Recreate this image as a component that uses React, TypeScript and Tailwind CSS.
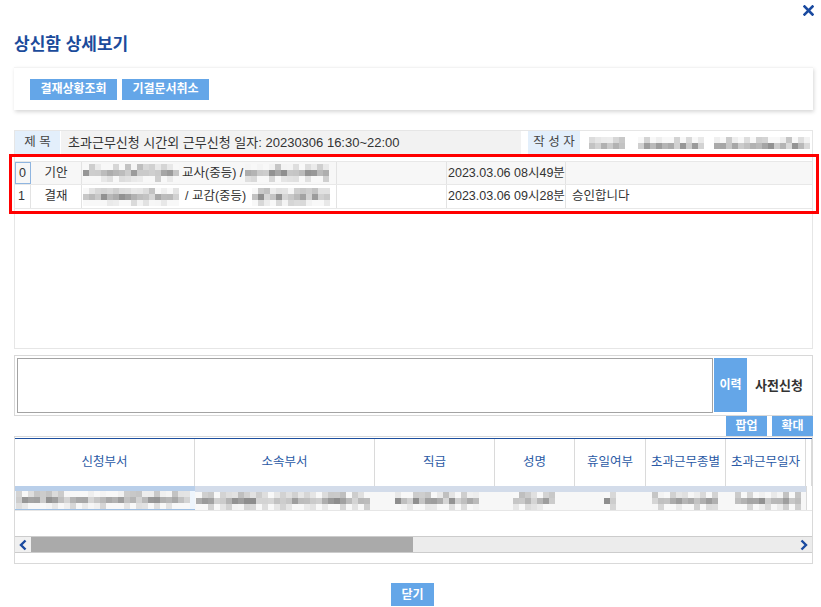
import React from 'react';

// small deterministic generator so the blurred (mosaic) cells look the same each render
function rng(seed: number) {
    let a = seed * 2654435761;
    return () => {
        a |= 0;
        a = (a + 0x6d2b79f5) | 0;
        let t = Math.imul(a ^ (a >>> 15), 1 | a);
        t = (t + Math.imul(t ^ (t >>> 7), 61 | t)) ^ t;
        return ((t ^ (t >>> 14)) >>> 0) / 4294967296;
    };
}

interface MosaicProps {
    w: number;
    seed: number;
    rows?: number;
    light?: number;
}

const Mosaic: React.FC<MosaicProps> = ({ w, seed, rows = 3, light = 0 }) => {
    const r = rng(seed);
    const cols = Math.max(1, Math.round(w / 6));
    const cells = [];
    for (let y = 0; y < rows; y++) {
        for (let x = 0; x < cols; x++) {
            const base = y === 1 ? 140 : y === 0 ? 190 : 205;
            const v = Math.min(248, Math.round(base + r() * 75 + light));
            cells.push(<div key={`${y}-${x}`} style={{ background: `rgb(${v},${v},${v})` }} />);
        }
    }
    return (
        <div
            className="grid shrink-0"
            style={{ gridTemplateColumns: `repeat(${cols}, 6px)`, gridAutoRows: '6px', width: cols * 6 }}
        >
            {cells}
        </div>
    );
};

const CloseIcon = () => (
    <svg width="11" height="11" viewBox="0 0 11 11">
        <path d="M1.5 1.5 L9.5 9.5 M9.5 1.5 L1.5 9.5" stroke="#1a4aa0" strokeWidth="2.6" strokeLinecap="square" />
    </svg>
);

const Chevron = ({ dir }: { dir: 'left' | 'right' }) => (
    <svg width="8" height="12" viewBox="0 0 8 12">
        <path
            d={dir === 'left' ? 'M6.5 1.5 L2 6 L6.5 10.5' : 'M1.5 1.5 L6 6 L1.5 10.5'}
            fill="none"
            stroke="#1a4aa0"
            strokeWidth="2.4"
        />
    </svg>
);

const BlueButton: React.FC<{ label: string; className?: string }> = ({ label, className = '' }) => (
    <button className={`bg-[#64a6e8] text-white font-bold text-[12px] flex items-center justify-center ${className}`}>
        {label}
    </button>
);

const approvals = [
    { idx: '0', kind: '기안', role: '교사(중등) / ', date: '2023.03.06 08시49분', memo: '', seed: 11 },
    { idx: '1', kind: '결재', role: '/ 교감(중등)', date: '2023.03.06 09시28분', memo: '승인합니다', seed: 37 },
];

const gridCols = [
    { label: '신청부서', w: 'w-[180px]', mw: 174, mOff: 'pl-[1px]', seed: 5 },
    { label: '소속부서', w: 'w-[180px]', mw: 174, mOff: 'pl-[1px]', seed: 19 },
    { label: '직급', w: 'w-[120px]', mw: 84, mOff: 'pl-[20px]', seed: 23 },
    { label: '성명', w: 'w-[80px]', mw: 42, mOff: 'pl-[18px]', seed: 41 },
    { label: '휴일여부', w: 'w-[71px]', mw: 12, mOff: 'pl-[29px]', seed: 53 },
    { label: '초과근무종별', w: 'w-[80px]', mw: 66, mOff: 'pl-[6px]', seed: 61 },
    { label: '초과근무일자', w: 'w-[80px]', mw: 66, mOff: 'pl-[9px]', seed: 71 },
];

export default function App() {
    return (
        <div className="w-[821px] h-[607px] bg-white overflow-hidden text-[#333] font-['Liberation_Sans','Noto_Sans_CJK_KR',sans-serif]">
            {/* close */}
            <div className="h-[30px] flex justify-end items-start pt-[5px] pr-[7px]">
                <CloseIcon />
            </div>

            <h1 className="h-[30px] leading-[30px] pl-[14px] text-[17px] font-bold text-[#1b4b9b]">상신함 상세보기</h1>

            {/* toolbar */}
            <div className="mt-[7px] ml-[14px] w-[799px] h-[43px] bg-white border-t border-[#f3f3f3] shadow-[1px_2px_4px_rgba(0,0,0,0.16)] flex items-center gap-[5px] pl-[16px]">
                <BlueButton label="결재상황조회" className="w-[87px] h-[21px]" />
                <BlueButton label="기결문서취소" className="w-[87px] h-[21px]" />
            </div>

            {/* info + approval lines */}
            <div className="mt-[20px] ml-[14px] w-[799px] h-[219px] border border-[#e6e6e6] relative text-[12.5px]">
                <div className="flex h-[23px]">
                    <div className="w-[45px] bg-[#e3effb] flex items-center justify-center text-[#444]">제 목</div>
                    <div className="ml-[1px] w-[460px] bg-[#f2f2f2] flex items-center pl-[7px] text-[13px]">
                        초과근무신청 시간외 근무신청 일자: 20230306 16:30~22:00
                    </div>
                    <div className="ml-[7px] w-[52px] bg-[#e3effb] flex items-center justify-center text-[#444]">작 성 자</div>
                    <div className="flex-1 flex items-center pl-[9px]">
                        <Mosaic w={34} seed={3} rows={2} light={10} />
                        <div className="w-[13px]" />
                        <Mosaic w={63} seed={8} rows={2} light={10} />
                        <div className="w-[10px]" />
                        <Mosaic w={96} seed={13} rows={2} light={5} />
                    </div>
                </div>

                <div className="mt-[7px]">
                    {approvals.map((a, i) => (
                        <div key={a.idx} className={`flex h-[24px] border-b border-[#e8e8e8] ${i === 0 ? 'bg-[#f7f7f7] border-t' : 'bg-white'}`}>
                            <div className={`w-[16px] flex items-center pl-[3px] ${i === 0 ? 'border border-[#8fb5e0]' : 'border-r border-[#e3e3e3]'}`}>{a.idx}</div>
                            <div className="w-[51px] flex items-center justify-center border-r border-[#e3e3e3]">{a.kind}</div>
                            <div className="w-[255px] flex items-center pl-[1px] border-r border-[#e3e3e3] overflow-hidden whitespace-nowrap">
                                <Mosaic w={96} seed={a.seed} />
                                <span className={i === 0 ? 'ml-[3px]' : 'ml-[6px]'}>{a.role}</span>
                                <div className={i === 0 ? 'ml-[2px]' : 'ml-[6px]'}>
                                    <Mosaic w={i === 0 ? 84 : 78} seed={a.seed + 7} />
                                </div>
                            </div>
                            <div className="w-[110px] border-r border-[#e3e3e3]" />
                            <div className="w-[119px] flex items-center pl-[1px] border-r border-[#e3e3e3] whitespace-nowrap overflow-hidden">{a.date}</div>
                            <div className="flex-1 flex items-center pl-[6px]">{a.memo}</div>
                        </div>
                    ))}
                </div>

                {/* red highlight drawn over the approval table */}
                <div className="absolute left-[-6px] top-[23px] w-[810px] h-[60px] border-[3px] border-[#ff0000]" />
            </div>

            {/* comment */}
            <div className="mt-[6px] ml-[14px] w-[799px] h-[61px] border border-[#d8d8d8] flex p-[2px]">
                <div className="w-[696px] h-[55px] border border-[#a3a3a3] bg-white" />
                <div className="ml-[1px] w-[33px] h-[54px] bg-[#64a6e8] text-white font-bold text-[12px] flex items-center justify-center">이력</div>
                <div className="flex-1 flex items-center pl-[8px] text-[13px] font-bold text-[#333]">사전신청</div>
            </div>

            <div className="ml-[14px] w-[799px] h-[20px] flex justify-end gap-[5px]">
                <BlueButton label="팝업" className="w-[41px] h-[20px]" />
                <BlueButton label="확대" className="w-[41px] h-[20px]" />
            </div>

            {/* grid */}
            <div className="ml-[14px] w-[799px] h-[128px] border border-[#d9d9d9] text-[12.5px]">
                <div className="mt-[1px] border-t border-[#1d4f9e] flex h-[48px]">
                    {gridCols.map((c) => (
                        <div key={c.label} className={`${c.w} border-r border-[#dadada] flex items-center justify-center text-[#2b5aa5]`}>
                            {c.label}
                        </div>
                    ))}
                    <div className="w-[6px] border-r border-[#dadada]" />
                </div>
                <div className="flex h-[25px] border-b border-[#e6e6e6]">
                    {gridCols.map((c, i) => (
                        <div
                            key={c.label}
                            className={`${c.w} flex flex-col ${i === 0 ? 'bg-[#eef5fc] border-b border-[#9fc0e4]' : 'bg-[#f7f7f7]'}`}
                        >
                            <div className={`h-[6px] ${i === 0 ? 'bg-[#b9cfea]' : 'bg-[#d3dcea]'}`} />
                            <div className={`flex-1 ${c.mOff}`}>
                                <Mosaic w={c.mw} seed={c.seed} light={i === 0 ? 5 : 0} />
                            </div>
                        </div>
                    ))}
                    <div className="flex-1 border-l border-[#dadada]" />
                </div>
                <div className="h-[25px]" />
                <div className="h-[17px] flex border-y border-[#cccccc] bg-[#ececec]">
                    <div className="w-[16px] flex items-center justify-center bg-[#f0f0f0]">
                        <Chevron dir="left" />
                    </div>
                    <div className="w-[382px] bg-[#aaaaaa]" />
                    <div className="flex-1" />
                    <div className="w-[12px] flex items-center justify-start">
                        <Chevron dir="right" />
                    </div>
                </div>
            </div>

            <div className="mt-[19px] flex justify-center pl-[4px]">
                <BlueButton label="닫기" className="w-[43px] h-[23px] text-[12px]" />
            </div>
        </div>
    );
}
